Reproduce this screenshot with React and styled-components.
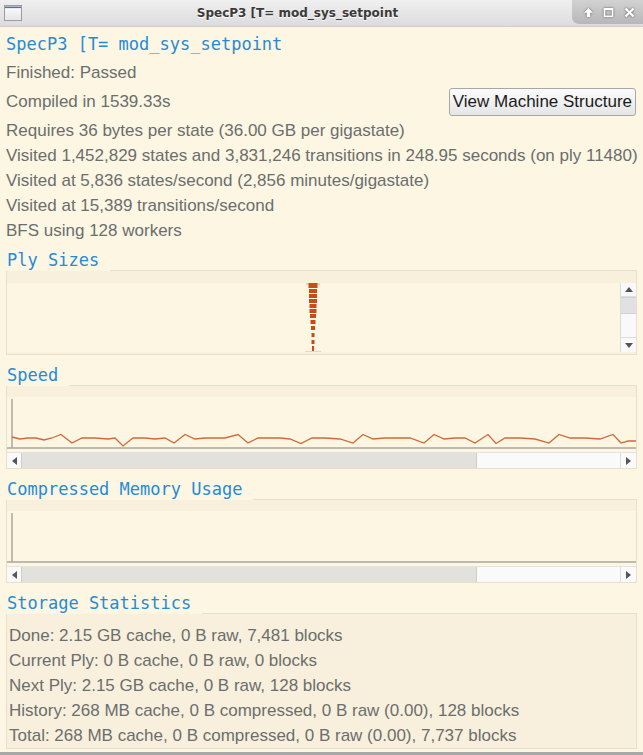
import React from 'react';
import styled, { createGlobalStyle } from 'styled-components';

// Solarized-ish palette used by the app
const CREAM = '#fdf6e3';
const BAND = '#f8f0dc';
const FRAME = '#e6dfca';
const BLUE = '#268bd2';
const TEXT = '#6b6e6e';
const ORANGE = '#cb4b16';
const AXIS = '#a9a69b';

const GlobalStyle = createGlobalStyle`
    html, body {
        margin: 0;
        padding: 0;
        background: ${CREAM};
    }
    body {
        overflow: hidden;
    }
`;

const Window = styled.div`
    width: 643px;
    height: 755px;
    display: flex;
    flex-direction: column;
    box-sizing: border-box;
    border-bottom: 3px solid #a8a8a8;
    background: ${CREAM};
    font-family: "Liberation Sans", Arial, sans-serif;
    overflow: hidden;
`;

// Window manager title bar
const TitleBar = styled.div`
    height: 27px;
    flex: none;
    display: flex;
    align-items: center;
    box-sizing: border-box;
    background: linear-gradient(#f0f0f0, #dcdcdc);
    border-bottom: 1px solid #cdcdcd;
`;

const WinIcon = styled.svg`
    margin-left: 3px;
    flex: none;
`;

const TitleText = styled.div`
    flex: 1;
    text-align: center;
    font-family: "DejaVu Sans", sans-serif;
    font-weight: bold;
    font-size: 12px;
    color: #3a3a3a;
    text-shadow: 0 1px 0 #ffffff;
`;

const Controls = styled.div`
    align-self: flex-start;
    width: 71px;
    height: 24px;
    display: flex;
    align-items: center;
    justify-content: space-around;
    padding: 0 3px 0 6px;
    box-sizing: border-box;
    background: linear-gradient(#d2d2d2, #b7b7b7);
    border-bottom-left-radius: 7px;
    svg {
        filter: drop-shadow(0 0 1px rgba(0, 0, 0, 0.55));
    }
`;

// Main content
const Content = styled.div`
    flex: 1;
    display: flex;
    flex-direction: column;
    padding: 0 6px;
`;

const Heading = styled.div`
    margin-top: 4px;
    font-family: "DejaVu Sans Mono", monospace;
    font-size: 17px;
    line-height: 26px;
    color: ${BLUE};
`;

const InfoLine = styled.div`
    font-size: 17px;
    line-height: 25px;
    color: ${TEXT};
    white-space: nowrap;
    margin-top: ${p => p.$top || 0}px;
`;

const ButtonRow = styled.div`
    height: 33px;
    display: flex;
    align-items: center;
    justify-content: space-between;
    padding-right: 1px;
`;

const Button = styled.button`
    height: 28px;
    padding: 0 3px;
    font-family: "Liberation Sans", Arial, sans-serif;
    font-size: 17px;
    color: #1b1b1b;
    border: 1px solid #a7a7a7;
    border-radius: 3px;
    background: linear-gradient(#fbfbfb, #e6e6e6);
`;

// Group box
const Section = styled.div`
    margin-top: ${p => p.$top}px;
    display: flex;
    flex-direction: column;
`;

const SectionHeader = styled.div`
    height: 22px;
    display: flex;
`;

const SectionTitle = styled.div`
    font-family: "DejaVu Sans Mono", monospace;
    font-size: 17px;
    line-height: 22px;
    color: ${BLUE};
    padding: 0 11px 0 1px;
`;

const HeaderLine = styled.div`
    flex: 1;
    border-bottom: 1px solid ${FRAME};
`;

const Box = styled.div`
    height: ${p => p.$h}px;
    box-sizing: border-box;
    border: 1px solid ${FRAME};
    border-top: none;
    background: ${BAND};
    padding-top: ${p => p.$pad}px;
    display: flex;
    flex-direction: column;
`;

const PlotRow = styled.div`
    height: ${p => p.$h}px;
    display: flex;
`;

const PlotArea = styled.div`
    flex: 1;
    background: ${CREAM};
    svg {
        display: block;
    }
`;

// Scrollbars
const VScroll = styled.div`
    width: 15px;
    display: flex;
    flex-direction: column;
    background: #f9f9f9;
    border-left: 1px solid #dcdcdc;
`;

const HScroll = styled.div`
    height: 15px;
    display: flex;
    background: #fafafa;
    border-top: 1px solid #e3e3e3;
`;

const ScrollButton = styled.div`
    flex: none;
    width: ${p => p.$w || 'auto'};
    height: ${p => p.$h || 'auto'};
    display: flex;
    align-items: center;
    justify-content: center;
    border-left: ${p => (p.$sep ? '1px solid #dedede' : 'none')};
    border-bottom: ${p => (p.$sepB ? '1px solid #dedede' : 'none')};
    border-top: ${p => (p.$sepT ? '1px solid #dedede' : 'none')};
`;

const Arrow = styled.span`
    width: 0;
    height: 0;
    border-style: solid;
    border-color: transparent;
    ${p => p.$dir === 'up' && `border-width: 0 4px 5px 4px; border-bottom-color: #555;`}
    ${p => p.$dir === 'down' && `border-width: 5px 4px 0 4px; border-top-color: #555;`}
    ${p => p.$dir === 'left' && `border-width: 4px 5px 4px 0; border-right-color: #555;`}
    ${p => p.$dir === 'right' && `border-width: 4px 0 4px 5px; border-left-color: #555;`}
`;

const VThumb = styled.div`
    height: 15px;
    flex: none;
    background: #e1e1e1;
    border-top: 1px solid #d2d2d2;
    border-bottom: 1px solid #d2d2d2;
`;

const HThumb = styled.div`
    width: ${p => p.$w}px;
    flex: none;
    background: #e3e1dc;
    border-left: 1px solid #d0cec8;
    border-right: 1px solid #d0cec8;
`;

const Track = styled.div`
    flex: 1;
`;

const StatsBox = styled(Box)`
    padding-left: 2px;
`;

// Ply size bars (page y, height, width)
const plyDashes = [
    [283, 5, 9], [289, 4, 8], [294, 4, 8], [299, 4, 8], [304, 4, 7], [309, 4, 7],
    [314, 4, 6], [320, 4, 5], [326, 4, 4], [333, 4, 3], [340, 4, 3], [346, 6, 2],
];

// Speed trace points in page coordinates
const speedPoints = [
    [12, 437], [20, 439], [28, 438], [36, 438], [44, 440], [52, 438], [61, 434.5], [72, 443],
    [82, 438], [95, 438], [108, 439], [115, 438], [123, 446], [133, 438], [145, 438], [155, 439],
    [165, 438], [174, 443], [185, 434.5], [195, 439], [205, 438], [215, 438], [225, 438],
    [238, 434.5], [248, 443], [258, 438], [270, 438], [280, 438], [290, 439], [301, 443.5],
    [312, 438], [325, 438], [340, 439], [353, 443], [363, 434.5], [373, 439], [385, 438],
    [395, 438], [410, 438], [424, 443], [434, 434.5], [444, 439], [455, 438], [465, 438],
    [475, 443], [488, 434.5], [496, 443.5], [505, 438], [520, 438], [535, 439], [549, 443],
    [559, 434.5], [570, 438], [585, 438], [600, 439], [613, 434.5], [621, 443], [628, 441],
    [636, 441],
];

function HorizontalScrollbar() {
    return (
        <HScroll>
            <ScrollButton $w="14px"><Arrow $dir="left" /></ScrollButton>
            <HThumb $w={454} />
            <Track />
            <ScrollButton $w="15px" $sep><Arrow $dir="right" /></ScrollButton>
        </HScroll>
    );
}

function Axes() {
    return (
        <>
            <line x1="5" y1="2" x2="5" y2="51" stroke={AXIS} strokeWidth="1.5" />
            <line x1="0" y1="51" x2="629" y2="51" stroke={AXIS} strokeWidth="1.5" />
        </>
    );
}

function GroupBox({ title, top, children }) {
    return (
        <Section $top={top}>
            <SectionHeader>
                <SectionTitle>{title}</SectionTitle>
                <HeaderLine />
            </SectionHeader>
            {children}
        </Section>
    );
}

export default function App() {
    const trace = speedPoints.map(([x, y]) => `${x - 7},${y - 397}`).join(' ');

    return (
        <Window>
            <GlobalStyle />
            <TitleBar>
                <WinIcon width="20" height="18" viewBox="0 0 20 18">
                    <defs>
                        <linearGradient id="wg" x1="0" y1="0" x2="0" y2="1">
                            <stop offset="0" stopColor="#ffffff" />
                            <stop offset="1" stopColor="#e4e4ea" />
                        </linearGradient>
                    </defs>
                    <rect x="1.5" y="1.5" width="17" height="15" fill="url(#wg)" stroke="#9c9ca4" />
                    <rect x="2" y="2.5" width="16" height="1.6" fill="#5a6f9c" />
                </WinIcon>
                <TitleText>SpecP3 [T= mod_sys_setpoint</TitleText>
                <Controls>
                    <svg width="11" height="11" viewBox="0 0 11 11">
                        <path d="M5.5 1 L10 5.8 L7.2 5.8 L7.2 10 L3.8 10 L3.8 5.8 L1 5.8 Z" fill="#fff" />
                    </svg>
                    <svg width="11" height="11" viewBox="0 0 11 11">
                        <rect x="1.5" y="1.8" width="8" height="7.5" fill="none" stroke="#fff" strokeWidth="1.6" />
                        <rect x="1" y="1" width="9" height="2.2" fill="#fff" />
                    </svg>
                    <svg width="11" height="11" viewBox="0 0 11 11">
                        <path d="M1.5 1.5 L9.5 9.5 M9.5 1.5 L1.5 9.5" stroke="#fff" strokeWidth="2.2" />
                    </svg>
                </Controls>
            </TitleBar>

            <Content>
                <Heading>SpecP3 [T= mod_sys_setpoint</Heading>
                <InfoLine $top={3}>Finished: Passed</InfoLine>
                <ButtonRow>
                    <InfoLine>Compiled in 1539.33s</InfoLine>
                    <Button>View Machine Structure</Button>
                </ButtonRow>
                <InfoLine>Requires 36 bytes per state (36.00 GB per gigastate)</InfoLine>
                <InfoLine>Visited 1,452,829 states and 3,831,246 transitions in 248.95 seconds (on ply 11480)</InfoLine>
                <InfoLine>Visited at 5,836 states/second (2,856 minutes/gigastate)</InfoLine>
                <InfoLine>Visited at 15,389 transitions/second</InfoLine>
                <InfoLine>BFS using 128 workers</InfoLine>

                <GroupBox title="Ply Sizes" top={6}>
                    <Box $h={84} $pad={12}>
                        <PlotRow $h={69}>
                            <PlotArea>
                                <svg width="613" height="69" viewBox="0 0 613 69">
                                    <rect x="299" y="0" width="14" height="2" fill="#f3d2b6" />
                                    {plyDashes.map(([y, h, w]) => (
                                        <rect key={y} x={306 - w / 2} y={y - 283} width={w} height={h} fill={ORANGE} />
                                    ))}
                                    <rect x="298" y="68" width="16" height="1" fill="#f3d2b6" />
                                </svg>
                            </PlotArea>
                            <VScroll>
                                <ScrollButton $h="13px" $sepB><Arrow $dir="up" /></ScrollButton>
                                <VThumb />
                                <Track />
                                <ScrollButton $h="14px" $sepT><Arrow $dir="down" /></ScrollButton>
                            </VScroll>
                        </PlotRow>
                    </Box>
                </GroupBox>

                <GroupBox title="Speed" top={9}>
                    <Box $h={83} $pad={11}>
                        <PlotRow $h={55}>
                            <PlotArea>
                                <svg width="629" height="55" viewBox="0 0 629 55">
                                    <Axes />
                                    <polyline points={trace} fill="none" stroke="#cf6a38" strokeWidth="1.3" />
                                </svg>
                            </PlotArea>
                        </PlotRow>
                        <HorizontalScrollbar />
                    </Box>
                </GroupBox>

                <GroupBox title="Compressed Memory Usage" top={9}>
                    <Box $h={83} $pad={11}>
                        <PlotRow $h={55}>
                            <PlotArea>
                                <svg width="629" height="55" viewBox="0 0 629 55">
                                    <Axes />
                                </svg>
                            </PlotArea>
                        </PlotRow>
                        <HorizontalScrollbar />
                    </Box>
                </GroupBox>

                <GroupBox title="Storage Statistics" top={9}>
                    <StatsBox $h={135} $pad={9}>
                        <InfoLine>Done: 2.15 GB cache, 0 B raw, 7,481 blocks</InfoLine>
                        <InfoLine>Current Ply: 0 B cache, 0 B raw, 0 blocks</InfoLine>
                        <InfoLine>Next Ply: 2.15 GB cache, 0 B raw, 128 blocks</InfoLine>
                        <InfoLine>History: 268 MB cache, 0 B compressed, 0 B raw (0.00), 128 blocks</InfoLine>
                        <InfoLine>Total: 268 MB cache, 0 B compressed, 0 B raw (0.00), 7,737 blocks</InfoLine>
                    </StatsBox>
                </GroupBox>
            </Content>
        </Window>
    );
}
